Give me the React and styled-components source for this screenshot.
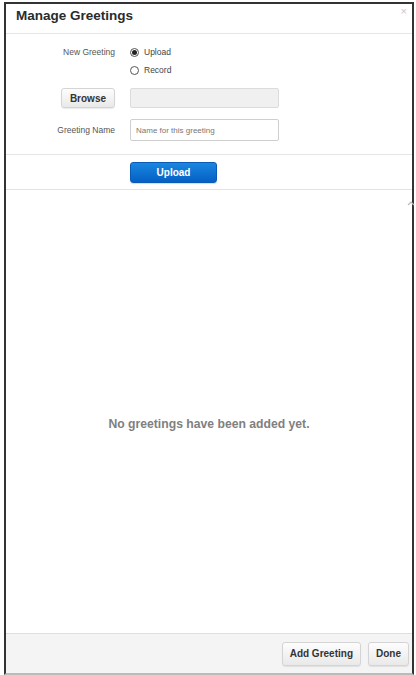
import { createGlobalStyle } from "styled-components";
import styled from "styled-components";

const GlobalStyle = createGlobalStyle`
  html, body {
    margin: 0;
    padding: 0;
    background: #fff;
    font-family: "Liberation Sans", Arial, sans-serif;
  }
`;

const Dialog = styled.div`
  position: relative;
  box-sizing: border-box;
  width: 410px;
  height: 673px;
  margin: 2px 0 0 4px;
  border: 2px solid #333;
  border-bottom-color: #bbb;
  display: flex;
  flex-direction: column;
  background: #fff;
`;

const Header = styled.div`
  height: 29px;
  display: flex;
  align-items: center;
  padding: 0 10px;
  border-bottom: 1px solid #e6e6e6;
  position: relative;
`;

const Title = styled.h1`
  margin: 0;
  font-size: 13.5px;
  font-weight: bold;
  color: #2b2b2b;
  margin-top: -6px;
`;

const Close = styled.span`
  position: absolute;
  top: 1px;
  right: 5px;
  font-size: 11px;
  color: #c8c8c8;
`;

const Form = styled.div`
  display: grid;
  grid-template-columns: 109px 1fr;
  column-gap: 15px;
  row-gap: 0;
  padding: 9px 0 13px;
  border-bottom: 1px solid #e6e6e6;
`;

const Label = styled.div`
  display: flex;
  align-items: center;
  justify-content: flex-end;
  height: ${(p) => p.h || 18}px;
  margin-top: ${(p) => p.mt || 0}px;
  font-size: 8.5px;
  color: #555;
`;

const Cell = styled.div`
  display: flex;
  align-items: center;
  height: ${(p) => p.h || 18}px;
  margin-top: ${(p) => p.mt || 0}px;
`;

const RadioRow = styled.label`
  display: flex;
  align-items: center;
  gap: 5px;
  font-size: 8.5px;
  color: #444;
`;

const Radio = styled.span`
  box-sizing: border-box;
  width: 9px;
  height: 9px;
  border-radius: 50%;
  border: 1px solid #555;
  display: flex;
  align-items: center;
  justify-content: center;
  &::after {
    content: "";
    width: 5px;
    height: 5px;
    border-radius: 50%;
    background: ${(p) => (p.checked ? "#222" : "transparent")};
  }
`;

const GrayButton = styled.button`
  box-sizing: border-box;
  height: ${(p) => p.h || 20}px;
  padding: 0 ${(p) => p.px || 9}px;
  border: 1px solid #d4d4d4;
  border-radius: 3px;
  background: linear-gradient(#fdfdfd, #e9e9e9);
  box-shadow: 0 1px 1px rgba(0, 0, 0, 0.08);
  font-family: inherit;
  font-size: 10px;
  font-weight: bold;
  color: #333;
`;

const FileField = styled.div`
  box-sizing: border-box;
  width: 149px;
  height: 20px;
  border: 1px solid #dcdcdc;
  border-radius: 2px;
  background: #f0f0f0;
`;

const TextField = styled.input`
  box-sizing: border-box;
  width: 149px;
  height: 22px;
  border: 1px solid #cfcfcf;
  border-radius: 2px;
  padding: 0 5px;
  font-family: inherit;
  font-size: 8px;
  color: #333;
  &::placeholder {
    color: #777;
  }
`;

const UploadBar = styled.div`
  display: grid;
  grid-template-columns: 109px 1fr;
  column-gap: 15px;
  padding: 7px 0 6px;
  border-bottom: 1px solid #e3e3e3;
`;

const PrimaryButton = styled.button`
  box-sizing: border-box;
  width: 87px;
  height: 21px;
  border: 1px solid #0a5bb8;
  border-radius: 3px;
  background: linear-gradient(#1a86e0, #0560c4);
  box-shadow: 0 1px 1px rgba(0, 0, 0, 0.15);
  font-family: inherit;
  font-size: 10px;
  font-weight: bold;
  color: #fff;
`;

const Body = styled.div`
  flex: 1;
  position: relative;
  display: flex;
  align-items: center;
  justify-content: center;
  padding-top: 25px;
`;

const Empty = styled.div`
  font-size: 12.2px;
  font-weight: bold;
  color: #808080;
`;

const ScrollCaret = styled.svg`
  position: absolute;
  top: 10px;
  right: -3px;
`;

const Footer = styled.div`
  height: 39px;
  display: flex;
  align-items: center;
  justify-content: flex-end;
  gap: 7px;
  padding: 0 3px 0 0;
  background: #f4f4f4;
  border-top: 1px solid #dedede;
`;

export default function App() {
  return (
    <>
      <GlobalStyle />
      <Dialog>
        <Header>
          <Title>Manage Greetings</Title>
          <Close>×</Close>
        </Header>

        <Form>
          <Label>New Greeting</Label>
          <Cell>
            <RadioRow>
              <Radio checked />
              Upload
            </RadioRow>
          </Cell>
          <Label />
          <Cell>
            <RadioRow>
              <Radio />
              Record
            </RadioRow>
          </Cell>
          <Label h={22} mt={8}>
            <GrayButton px={8}>Browse</GrayButton>
          </Label>
          <Cell h={22} mt={8}>
            <FileField />
          </Cell>
          <Label h={22} mt={10}>Greeting Name</Label>
          <Cell h={22} mt={10}>
            <TextField placeholder="Name for this greeting" />
          </Cell>
        </Form>

        <UploadBar>
          <div />
          <div>
            <PrimaryButton>Upload</PrimaryButton>
          </div>
        </UploadBar>

        <Body>
          <ScrollCaret width="8" height="6" viewBox="0 0 8 6">
            <path d="M1 5 L4 2 L7 5" fill="none" stroke="#bbb" strokeWidth="1.2" />
          </ScrollCaret>
          <Empty>No greetings have been added yet.</Empty>
        </Body>

        <Footer>
          <GrayButton h={24} px={7}>Add Greeting</GrayButton>
          <GrayButton h={24} px={7}>Done</GrayButton>
        </Footer>
      </Dialog>
    </>
  );
}
